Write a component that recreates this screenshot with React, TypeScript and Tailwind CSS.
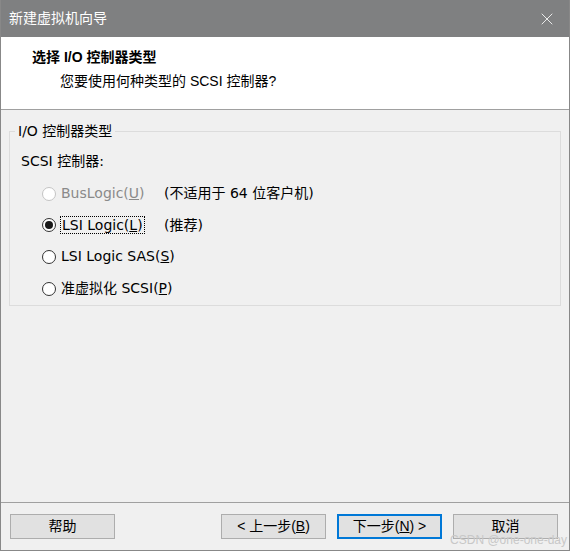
import { X } from "lucide-react";

const font = { fontFamily: '"Liberation Sans", "Noto Sans CJK SC", sans-serif' };
const bodyFont = { fontFamily: '"DejaVu Sans", "Noto Sans CJK SC", sans-serif' };

function Radio({ checked, disabled }: { checked?: boolean; disabled?: boolean }) {
  return (
    <span
      className={`flex h-[14px] w-[14px] shrink-0 items-center justify-center rounded-full border bg-white ${
        disabled ? "border-[#c4c4c4]" : "border-[#333333]"
      }`}
    >
      {checked && <span className="h-[8px] w-[8px] rounded-full bg-[#1a1a1a]" />}
    </span>
  );
}

function Btn({ children, primary }: { children: React.ReactNode; primary?: boolean }) {
  return (
    <div
      className={`flex h-[25px] w-[105px] items-center justify-center bg-[#e1e1e1] text-[14px] text-black ${
        primary ? "border-2 border-[#0078d7]" : "border border-[#adadad]"
      }`}
    >
      {children}
    </div>
  );
}

export default function App() {
  return (
    <div
      style={font}
      className="flex h-[551px] w-[570px] flex-col border border-t-0 border-[#888888] bg-[#f0f0f0] text-black"
    >
      {/* Title bar */}
      <div className="flex h-[37px] shrink-0 items-center justify-between bg-[#7f8081] pl-[8px] pr-[12px] text-white">
        <span className="text-[14px]">新建虚拟机向导</span>
        <X className="h-[20px] w-[20px]" strokeWidth={1} />
      </div>

      {/* Header */}
      <div className="h-[73px] shrink-0 border-b border-[#a0a0a0] bg-white pt-[10px]">
        <div className="pl-[31px] text-[14px] font-bold">选择 I/O 控制器类型</div>
        <div className="mt-[3px] pl-[59px] text-[14px]">您要使用何种类型的 SCSI 控制器?</div>
      </div>

      {/* Content */}
      <div className="flex-1 px-[8px] pt-[12px]" style={bodyFont}>
        <fieldset className="h-[184px] border border-[#dcdcdc] px-[11px]">
          <legend className="ml-[-6px] px-[3px] text-[14px] leading-[18px]">I/O 控制器类型</legend>
          <div className="mt-[11px] text-[14px]">SCSI 控制器:</div>
          <div className="mt-[12px] flex flex-col gap-[12.7px] pl-[21px] text-[14px]">
            <div className="flex h-[19px] items-center">
              <Radio disabled />
              <span className="ml-[5px] w-[103px] text-[#8a8a8a]">
                BusLogic(<span className="underline">U</span>)
              </span>
              <span>(不适用于 64 位客户机)</span>
            </div>
            <div className="flex h-[19px] items-center">
              <Radio checked />
              <span className="ml-[4px] w-[104px]">
                <span className="border border-dotted border-black px-[1px]">
                  LSI Logic(<span className="underline">L</span>)
                </span>
              </span>
              <span>(推荐)</span>
            </div>
            <div className="flex h-[19px] items-center">
              <Radio />
              <span className="ml-[5px]">
                LSI Logic SAS(<span className="underline">S</span>)
              </span>
            </div>
            <div className="flex h-[19px] items-center">
              <Radio />
              <span className="ml-[5px]">
                准虚拟化 SCSI(<span className="underline">P</span>)
              </span>
            </div>
          </div>
        </fieldset>
      </div>

      {/* Footer */}
      <div className="relative h-[48px] shrink-0 border-t border-[#a0a0a0] pl-[9px] pr-[11px] pt-[11px]">
        <div className="flex items-center">
          <Btn>帮助</Btn>
          <div className="ml-auto flex gap-[11px]">
            <Btn>
              &lt; 上一步(<span className="underline">B</span>)
            </Btn>
            <Btn primary>
              下一步(<span className="underline">N</span>) &gt;
            </Btn>
            <Btn>取消</Btn>
          </div>
        </div>
        <span className="absolute bottom-[1px] right-[2px] text-[12px] text-[#c8c8c8]">CSDN @one-one-day</span>
      </div>
    </div>
  );
}
